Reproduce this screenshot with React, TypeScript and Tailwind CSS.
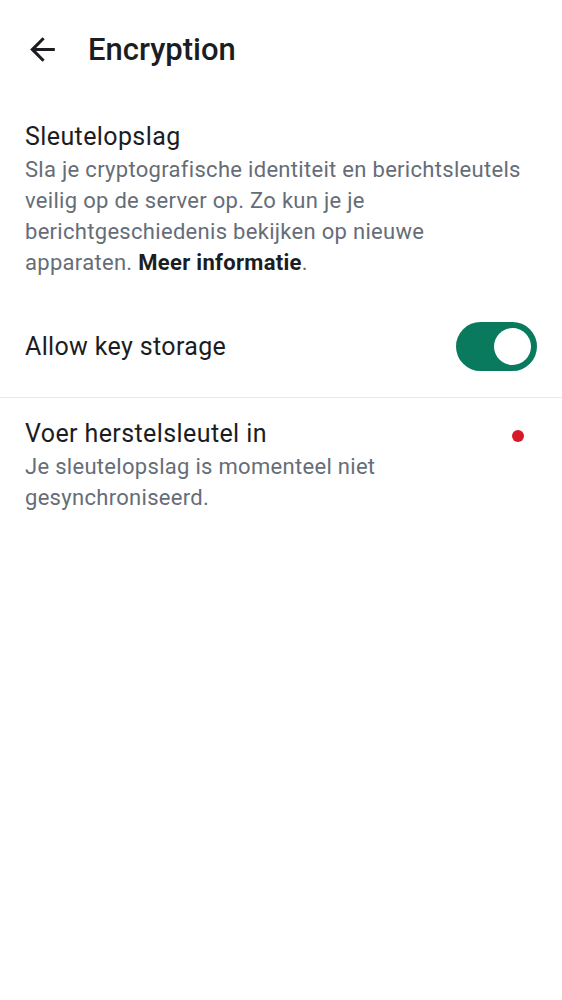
export default function App() {
  return (
    <div className="min-h-screen w-full bg-white font-['Roboto',sans-serif] text-[#1b1d22]">
      <header className="flex h-[99px] items-center">
        <button className="ml-[24px] flex h-[37px] w-[37px] items-center justify-center">
          <svg viewBox="0 0 24 24" className="h-[37px] w-[37px]" fill="#1b1d22">
            <path d="M20 11H7.83l5.59-5.59L12 4l-8 8 8 8 1.41-1.41L7.83 13H20v-2z" />
          </svg>
        </button>
        <h1 className="ml-[27px] mt-[2px] text-[31px] font-medium">Encryption</h1>
      </header>

      <section className="px-[25px] pt-[20px]">
        <p className="text-[25px] leading-[35px] tracking-[0.4px]">Sleutelopslag</p>
        <p className="text-[22px] leading-[31px] tracking-[0.3px] text-[#656d77]">
          Sla je cryptografische identiteit en berichtsleutels veilig op de
          server op. Zo kun je je berichtgeschiedenis bekijken op nieuwe
          apparaten. <span className="font-bold text-[#1b1d22]">Meer informatie</span>.
        </p>
      </section>

      <div className="flex items-center justify-between pl-[25px] pr-[25px] pt-[44px] pb-[26px]">
        <span className="text-[25px] tracking-[0.35px]">Allow key storage</span>
        <div className="flex h-[49px] w-[81px] items-center justify-end rounded-full bg-[#0a7a5e] pr-[6px]">
          <div className="h-[37px] w-[37px] rounded-full bg-white" />
        </div>
      </div>

      <div className="h-px bg-[#e6e8eb]" />

      <div className="flex items-start justify-between px-[25px] pt-[18px]">
        <div className="flex-1 pr-[60px]">
          <p className="text-[25px] leading-[35px] tracking-[0.4px]">Voer herstelsleutel in</p>
          <p className="text-[22px] leading-[31px] tracking-[0.3px] text-[#656d77]">
            Je sleutelopslag is momenteel niet gesynchroniseerd.
          </p>
        </div>
        <div className="mr-[13px] mt-[14px] h-[12px] w-[12px] rounded-full bg-[#d51928]" />
      </div>
    </div>
  );
}
